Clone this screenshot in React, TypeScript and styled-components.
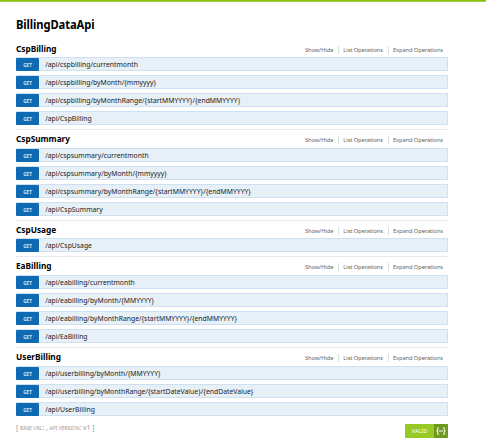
import React from "react";
import styled, { createGlobalStyle } from "styled-components";

const GlobalStyle = createGlobalStyle`
  * { box-sizing: border-box; }
  body {
    margin: 0;
    background: #fff;
    font-family: "Noto Sans", "Open Sans", sans-serif;
    color: #000;
  }
`;

const TopBar = styled.div`
  height: 2px;
  background: #89bf04;
  border-bottom: 1px solid #a3cc40;
`;

const Container = styled.main`
  width: 432px;
  margin-left: 16px;
`;

const ApiTitle = styled.h1`
  margin: 0;
  height: 36.6px;
  padding-top: 14px;
  font-size: 12.1px;
  line-height: 17px;
  letter-spacing: -0.1px;
  font-weight: 700;
  transform: scaleX(0.925);
  transform-origin: left;
`;

const Section = styled.section`
  & + & > header { border-top-color: #e8ebed; }
`;

const SectionHeader = styled.header`
  display: flex;
  justify-content: space-between;
  height: 18.35px;
  padding: 3px 5px 0 0.3px;
  border-top: 1px solid transparent;
`;

const SectionName = styled.h2`
  margin: 0;
  font-size: 8.9px;
  line-height: 12px;
  font-weight: 700;
  transform: scaleX(0.93);
  transform-origin: left;
`;

const Options = styled.ul`
  display: flex;
  margin: 3px 0 0;
  padding: 0;
  list-style: none;
  height: 8px;
`;

const Option = styled.li`
  font-size: 5.7px;
  line-height: 8px;
  letter-spacing: -0.06px;
  color: #666;
  white-space: nowrap;
  & + & {
    margin-left: 5px;
    padding-left: 4px;
    border-left: 1px solid #ddd;
  }
`;

const Operation = styled.div`
  display: flex;
  height: 14px;
  margin-bottom: 4.1px;
  background: #e7f0f7;
  border: 1px solid #cfe1f0;
  border-left: 0;
`;

const Method = styled.span`
  width: 23px;
  height: 13px;
  background: #0f6ab4;
  border-radius: 1px;
  color: #d5e5f3;
  font-size: 4.7px;
  font-weight: 700;
  line-height: 14px;
  text-align: center;
`;

const Path = styled.span`
  padding-left: 6.2px;
  font-size: 7.3px;
  line-height: 12.6px;
  color: #222;
  white-space: nowrap;
  transform: scaleX(0.935);
  transform-origin: 6.2px center;
`;

const Footer = styled.footer`
  display: flex;
  justify-content: space-between;
`;

const Info = styled.div`
  margin-top: 2px;
  font-size: 6.9px;
  line-height: 12px;
  letter-spacing: -0.03px;
  color: #999;
  white-space: pre;
`;

const Small = styled.span`
  font-size: 5px;
`;

const Badge = styled.div`
  display: flex;
  width: 43px;
  height: 14px;
  margin-top: 4px;
  border-radius: 1px;
  overflow: hidden;
  background: #97ca25;
  color: #fff;
`;

const BadgeLabel = styled.span`
  flex: 1;
  font-size: 5.5px;
  line-height: 14px;
  text-align: center;
`;

const BadgeIcon = styled.span`
  display: flex;
  width: 14px;
  background: #70981c;
`;

const sections = [
  { name: "CspBilling", paths: ["/api/cspbilling/currentmonth", "/api/cspbilling/byMonth/{mmyyyy}", "/api/cspbilling/byMonthRange/{startMMYYYY}/{endMMYYYY}", "/api/CspBilling"] },
  { name: "CspSummary", paths: ["/api/cspsummary/currentmonth", "/api/cspsummary/byMonth/{mmyyyy}", "/api/cspsummary/byMonthRange/{startMMYYYY}/{endMMYYYY}", "/api/CspSummary"] },
  { name: "CspUsage", paths: ["/api/CspUsage"] },
  { name: "EaBilling", paths: ["/api/eabilling/currentmonth", "/api/eabilling/byMonth/{MMYYYY}", "/api/eabilling/byMonthRange/{startMMYYYY}/{endMMYYYY}", "/api/EaBilling"] },
  { name: "UserBilling", paths: ["/api/userbilling/byMonth/{MMYYYY}", "/api/userbilling/byMonthRange/{startDateValue}/{endDateValue}", "/api/UserBilling"] },
];

export default function App() {
  return (
    <>
      <GlobalStyle />
      <TopBar />
      <Container>
        <ApiTitle>BillingDataApi</ApiTitle>
        {sections.map((section) => (
          <Section key={section.name}>
            <SectionHeader>
              <SectionName>{section.name}</SectionName>
              <Options>
                <Option>Show/Hide</Option>
                <Option>List Operations</Option>
                <Option>Expand Operations</Option>
              </Options>
            </SectionHeader>
            {section.paths.map((path) => (
              <Operation key={path}>
                <Method>GET</Method>
                <Path>{path}</Path>
              </Operation>
            ))}
          </Section>
        ))}
        <Footer>
          <Info>[ <Small>BASE URL</Small>: , <Small>API VERSION</Small>: v1 ]</Info>
          <Badge>
            <BadgeLabel>VALID</BadgeLabel>
            <BadgeIcon>
              <svg width="14" height="14" viewBox="0 0 14 14" fill="none" stroke="#fff" strokeWidth="1">
                <path d="M4.6 3.5H3.8V6.3L2.6 7L3.8 7.7V10.5H4.6M9.4 3.5H10.2V6.3L11.4 7L10.2 7.7V10.5H9.4M5 7H9" />
              </svg>
            </BadgeIcon>
          </Badge>
        </Footer>
      </Container>
    </>
  );
}
